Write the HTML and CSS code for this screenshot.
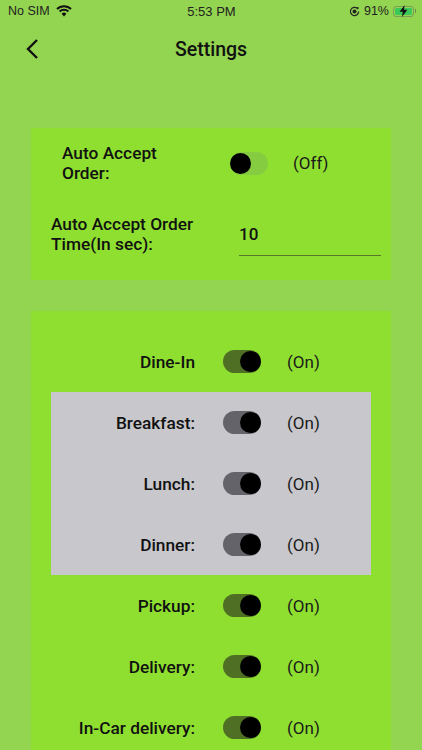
FILE: index.html
```html
<!DOCTYPE html>
<html lang="en">
<head>
    <meta charset="UTF-8">
    <meta name="viewport" content="width=device-width, initial-scale=1.0">
    <title>Settings</title>
    <link rel="stylesheet" href="styles.css">
</head>
<body>
    <div class="status-bar">
        <div class="status-left">
            <span>No SIM</span>
            <svg class="wifi" width="16" height="12" viewBox="0 0 16 12">
                <path d="M1 4 A10 10 0 0 1 15 4" fill="none" stroke="#111" stroke-width="2"/>
                <path d="M3.6 6.6 A6.4 6.4 0 0 1 12.4 6.6" fill="none" stroke="#111" stroke-width="2"/>
                <path d="M5.6 8.8 A3.4 3.4 0 0 1 10.4 8.8 L8 11.4 Z" fill="#111"/>
            </svg>
        </div>
        <div class="status-time">5:53 PM</div>
        <div class="status-right">
            <svg width="11" height="11" viewBox="0 0 11 11">
                <path d="M9.6 5.5 A4.1 4.1 0 1 1 8.4 2.6" fill="none" stroke="#222" stroke-width="1.2"/>
                <path d="M7.6 1 L10 1.6 L8.8 3.8 Z" fill="#222"/>
                <circle cx="5.5" cy="5.5" r="2" fill="#222"/>
            </svg>
            <span>91%</span>
            <div class="battery">
                <div class="battery-fill"></div>
                <svg class="bolt" width="9" height="12" viewBox="0 0 9 12">
                    <path d="M5.6 0 L0.6 6.8 L3.8 6.8 L3 12 L8.4 4.8 L5 4.8 Z" fill="#111"/>
                </svg>
            </div>
            <div class="battery-cap"></div>
        </div>
    </div>

    <div class="header">
        <svg class="back" width="14" height="22" viewBox="0 0 14 22">
            <path d="M12 2 L3 11 L12 20" fill="none" stroke="#111" stroke-width="2.4"/>
        </svg>
        <h1>Settings</h1>
    </div>

    <div class="card card-auto">
        <div class="auto-row">
            <div class="auto-label">Auto Accept<br>Order:</div>
            <div class="toggle off"><span class="knob"></span></div>
            <div class="state">(Off)</div>
        </div>
        <div class="time-row">
            <div class="time-label">Auto Accept Order<br>Time(In sec):</div>
            <div class="time-input">10</div>
        </div>
    </div>

    <div class="card card-types">
        <div class="row">
            <div class="label">Dine-In</div>
            <div class="toggle on"><span class="knob"></span></div>
            <div class="state">(On)</div>
        </div>
        <div class="meals">
            <div class="row">
                <div class="label">Breakfast:</div>
                <div class="toggle on"><span class="knob"></span></div>
                <div class="state">(On)</div>
            </div>
            <div class="row">
                <div class="label">Lunch:</div>
                <div class="toggle on"><span class="knob"></span></div>
                <div class="state">(On)</div>
            </div>
            <div class="row">
                <div class="label">Dinner:</div>
                <div class="toggle on"><span class="knob"></span></div>
                <div class="state">(On)</div>
            </div>
        </div>
        <div class="row">
            <div class="label">Pickup:</div>
            <div class="toggle on"><span class="knob"></span></div>
            <div class="state">(On)</div>
        </div>
        <div class="row">
            <div class="label">Delivery:</div>
            <div class="toggle on"><span class="knob"></span></div>
            <div class="state">(On)</div>
        </div>
        <div class="row">
            <div class="label">In-Car delivery:</div>
            <div class="toggle on"><span class="knob"></span></div>
            <div class="state">(On)</div>
        </div>
    </div>
</body>
</html>
```

FILE: styles.css
```css
* {
    margin: 0;
    padding: 0;
    box-sizing: border-box;
}

html,
body {
    height: 750px;
    overflow: hidden;
}

body {
    background: #93d450;
    color: #111;
    font-family: 'Roboto', sans-serif;
}

.status-bar {
    height: 22px;
    padding: 0 6px 0 8px;
    display: grid;
    grid-template-columns: 1fr auto 1fr;
    align-items: center;
    font-family: 'Liberation Sans', sans-serif;
    font-size: 12.5px;
    color: #222;
}

.status-left {
    display: flex;
    align-items: center;
    gap: 6px;
}

.status-time {
    font-size: 13px;
    padding-right: 1px;
}

.status-right {
    display: flex;
    align-items: center;
    justify-content: flex-end;
    gap: 4px;
}

.battery {
    position: relative;
    width: 21px;
    height: 11px;
    border: 1px solid #7a9f55;
    border-radius: 3px;
    padding: 1px;
}

.battery-fill {
    height: 100%;
    background: #3dc95a;
    border-radius: 1px;
}

.bolt {
    position: absolute;
    left: 5px;
    top: -2px;
}

.battery-cap {
    width: 1px;
    height: 4px;
    margin-left: -3px;
    background: #6d8f4c;
}

.header {
    height: 54px;
    position: relative;
    display: flex;
    justify-content: center;
    align-items: center;
}

.header h1 {
    font-size: 19.5px;
    font-weight: 500;
}

.back {
    position: absolute;
    left: 25px;
    top: 16px;
}

.card {
    margin: 0 31px;
    background: #8fdf30;
}

.card-auto {
    margin-top: 52px;
    height: 152px;
    padding: 15px 10px 0 20px;
}

.auto-row {
    display: flex;
    align-items: center;
    padding-left: 11px;
}

.auto-label,
.time-label,
.label {
    font-size: 17.3px;
    font-weight: 500;
    line-height: 20px;
    white-space: nowrap;
}

.auto-label {
    width: 168px;
}

.time-row {
    margin-top: 30px;
    display: flex;
    align-items: center;
}

.time-label {
    width: 188px;
    padding-bottom: 1px;
}

.time-input {
    flex: 1;
    height: 43px;
    padding-top: 11px;
    font-size: 17px;
    font-weight: 500;
    border-bottom: 1px solid #56782a;
}

.card-types {
    margin-top: 31px;
    height: 460px;
    padding: 20px 20px 0;
}

.row {
    height: 61px;
    display: flex;
    align-items: center;
}

.label {
    width: 144px;
    text-align: right;
}

.toggle {
    position: relative;
    width: 38px;
    height: 23px;
    margin-left: 28px;
    border-radius: 12px;
}

.auto-row .toggle {
    margin-left: 0;
}

.toggle.on {
    background: #4f6f24;
}

.meals .toggle.on {
    background: #636369;
}

.toggle.off {
    background: #86cc40;
}

.knob {
    position: absolute;
    top: 1px;
    width: 21px;
    height: 21px;
    border-radius: 50%;
    background: #000;
}

.toggle.on .knob {
    right: 0;
}

.toggle.off .knob {
    left: 0;
}

.state {
    margin-left: 26px;
    font-size: 17px;
    color: #1a1a1a;
}

.auto-row .state {
    margin-left: 25px;
}

.meals {
    background: #c8c7cc;
}
```
